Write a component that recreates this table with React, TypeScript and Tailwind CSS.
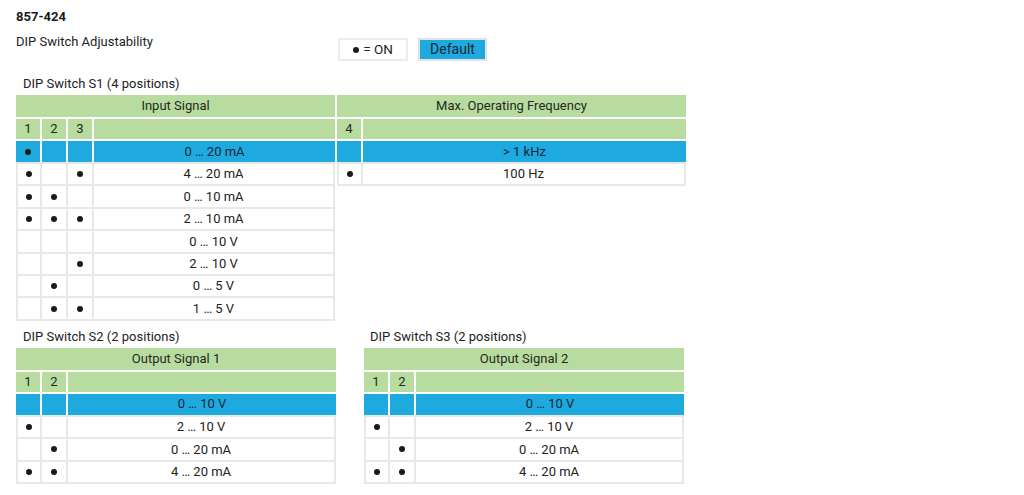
import React from "react";

type Row = { on: boolean[]; label: string };

function Dot({ small }: { small?: boolean }) {
  return (
    <span
      className={
        small
          ? "inline-block w-[6px] h-[6px] rounded-full bg-[#1a1a1a]"
          : "block w-[6px] h-[6px] rounded-full bg-[#1a1a1a]"
      }
    />
  );
}

function DipTable({
  title,
  nums,
  rows,
  className,
}: {
  title: string;
  nums: string[];
  rows: Row[];
  className: string;
}) {
  const [first, ...rest] = rows;
  return (
    <div className={className}>
      <div className="h-[22px] mb-[2px] bg-[#b8dca0] flex items-center justify-center text-[#1f2a1c]">
        {title}
      </div>
      <div className="flex gap-[2px] h-[20px] mb-[2px]">
        {nums.map((n) => (
          <div
            key={n}
            className="w-[24px] bg-[#b8dca0] flex items-center justify-center text-[#1f2a1c]"
          >
            {n}
          </div>
        ))}
        <div className="flex-1 bg-[#b8dca0]" />
      </div>
      <div className="flex gap-[2px] h-[21px]">
        {first.on.map((o, i) => (
          <div key={i} className="w-[24px] bg-[#1eaade] flex items-center justify-center">
            {o && <Dot />}
          </div>
        ))}
        <div className="flex-1 bg-[#1eaade] flex items-center justify-center text-[#13283a]">
          {first.label}
        </div>
      </div>
      <div className="bg-[#e8e8e8] px-[2px] pt-[2px] pb-[2px] flex flex-col gap-[2px]">
        {rest.map((r, ri) => (
          <div key={ri} className="flex gap-[2px] h-[20.4px]">
            {r.on.map((o, i) => (
              <div
                key={i}
                className={
                  i === 0
                    ? "w-[22px] bg-white flex items-center justify-center"
                    : "w-[24px] bg-white flex items-center justify-center"
                }
              >
                {o && <Dot />}
              </div>
            ))}
            <div className="flex-1 bg-white flex items-center justify-center text-[#222]">
              {r.label}
            </div>
          </div>
        ))}
      </div>
    </div>
  );
}

const s1Input: Row[] = [
  { on: [true, false, false], label: "0 … 20 mA" },
  { on: [true, false, true], label: "4 … 20 mA" },
  { on: [true, true, false], label: "0 … 10 mA" },
  { on: [true, true, true], label: "2 … 10 mA" },
  { on: [false, false, false], label: "0 … 10 V" },
  { on: [false, false, true], label: "2 … 10 V" },
  { on: [false, true, false], label: "0 … 5 V" },
  { on: [false, true, true], label: "1 … 5 V" },
];

const s1Freq: Row[] = [
  { on: [false], label: "> 1 kHz" },
  { on: [true], label: "100 Hz" },
];

const outRows: Row[] = [
  { on: [false, false], label: "0 … 10 V" },
  { on: [true, false], label: "2 … 10 V" },
  { on: [false, true], label: "0 … 20 mA" },
  { on: [true, true], label: "4 … 20 mA" },
];

export default function App() {
  return (
    <div
      className="w-[1024px] h-[495px] bg-white pl-4 pt-[9px] text-[13px] text-[#222]"
      style={{ fontFamily: "Roboto, 'Liberation Sans', sans-serif" }}
    >
      <div className="text-[13px] font-bold leading-[16px] text-[#1a1a1a]">857-424</div>
      <div className="flex items-start mt-[9px]">
        <div className="w-[322px] leading-[16px] text-[13px]">DIP Switch Adjustability</div>
        <div className="mt-[4px] w-[70px] h-[23px] border-2 border-[#ececec] bg-white flex items-center justify-center gap-[4px] text-[13.5px]">
          <Dot small />
          <span>= ON</span>
        </div>
        <div className="mt-[4px] ml-[10px] w-[69px] h-[23px] border-2 border-[#dfe3e6] bg-[#1eaade] flex items-center justify-center text-[14px] text-[#13283a]">
          Default
        </div>
      </div>

      <div className="mt-[15px] pl-[7px] leading-[16px]">DIP Switch S1 (4 positions)</div>
      <div className="mt-[3px] flex items-start gap-[2px]">
        <DipTable title="Input Signal" nums={["1", "2", "3"]} rows={s1Input} className="w-[319px]" />
        <DipTable title="Max. Operating Frequency" nums={["4"]} rows={s1Freq} className="w-[349px]" />
      </div>

      <div className="flex items-start gap-[28px] mt-[8px]">
        <div className="w-[320px]">
          <div className="pl-[7px] leading-[16px]">DIP Switch S2 (2 positions)</div>
          <div className="mt-[3px]">
            <DipTable title="Output Signal 1" nums={["1", "2"]} rows={outRows} className="w-[320px]" />
          </div>
        </div>
        <div className="w-[320px]">
          <div className="pl-[6px] leading-[16px]">DIP Switch S3 (2 positions)</div>
          <div className="mt-[3px]">
            <DipTable title="Output Signal 2" nums={["1", "2"]} rows={outRows} className="w-[320px]" />
          </div>
        </div>
      </div>
    </div>
  );
}
